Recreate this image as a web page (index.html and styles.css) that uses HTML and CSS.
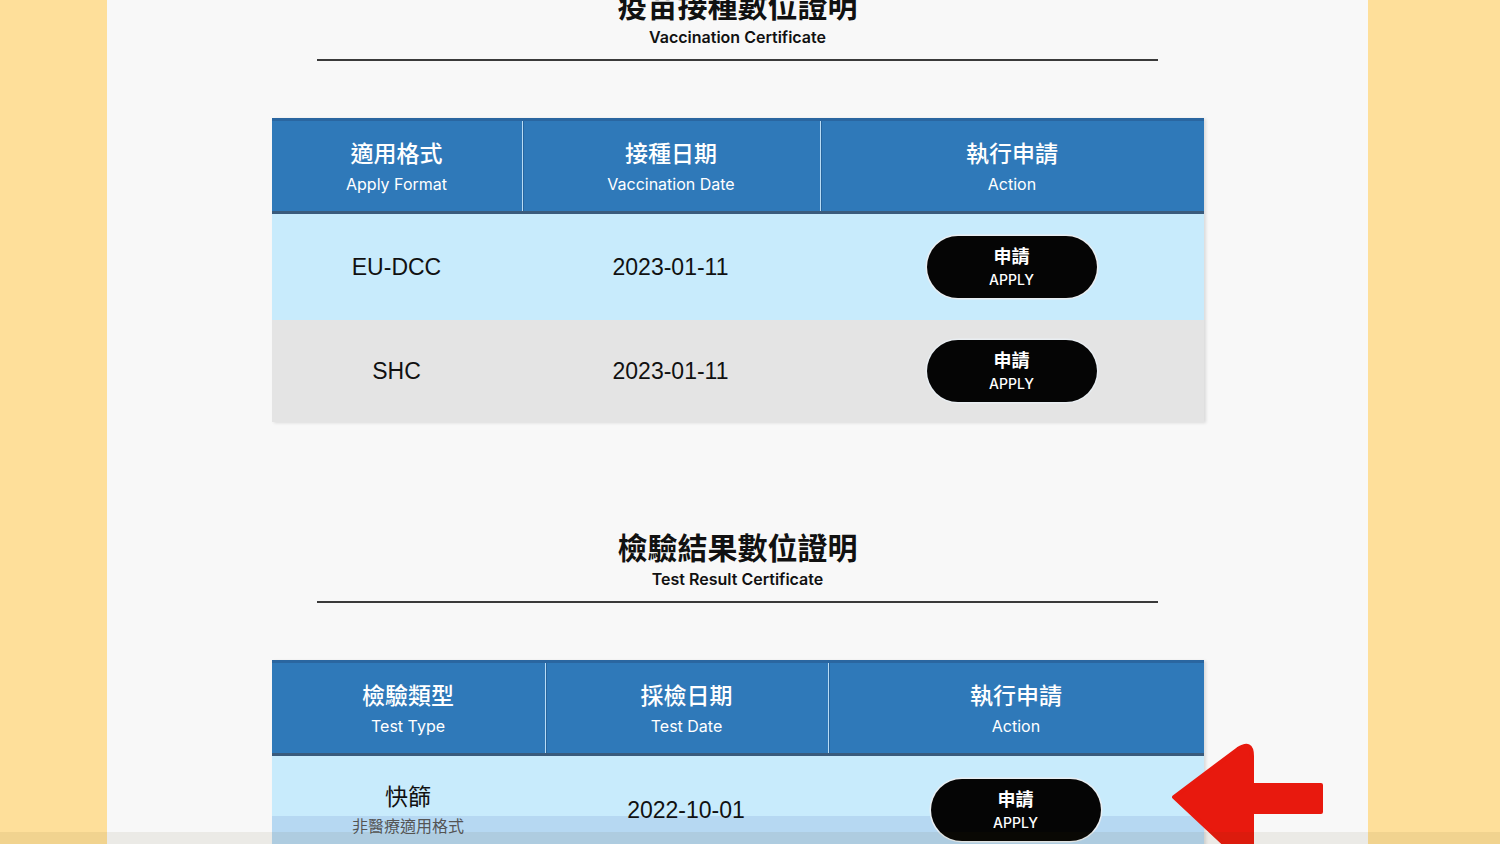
FILE: index.html
```html
<!DOCTYPE html>
<html lang="zh-Hant">
<head>
<meta charset="utf-8">
<title>數位證明</title>
<link rel="stylesheet" href="styles.css">
</head>
<body>
<main class="panel">
  <section class="section">
    <h1 class="title">疫苗接種數位證明</h1>
    <p class="subtitle">Vaccination Certificate</p>
    <hr class="rule">
    <div class="table table-vac">
      <div class="row head">
        <div class="cell"><span class="zh">適用格式</span><span class="en">Apply Format</span></div>
        <div class="cell"><span class="zh">接種日期</span><span class="en">Vaccination Date</span></div>
        <div class="cell"><span class="zh">執行申請</span><span class="en">Action</span></div>
      </div>
      <div class="row body blue">
        <div class="cell value">EU-DCC</div>
        <div class="cell value">2023-01-11</div>
        <div class="cell"><button class="apply"><b>申請</b><span>APPLY</span></button></div>
      </div>
      <div class="row body grey">
        <div class="cell value">SHC</div>
        <div class="cell value">2023-01-11</div>
        <div class="cell"><button class="apply"><b>申請</b><span>APPLY</span></button></div>
      </div>
    </div>
  </section>

  <section class="section">
    <h1 class="title">檢驗結果數位證明</h1>
    <p class="subtitle">Test Result Certificate</p>
    <hr class="rule">
    <div class="table table-test">
      <div class="row head">
        <div class="cell"><span class="zh">檢驗類型</span><span class="en">Test Type</span></div>
        <div class="cell"><span class="zh">採檢日期</span><span class="en">Test Date</span></div>
        <div class="cell"><span class="zh">執行申請</span><span class="en">Action</span></div>
      </div>
      <div class="row body blue tall">
        <div class="cell value"><span>快篩</span><span class="note">非醫療適用格式</span></div>
        <div class="cell value">2022-10-01</div>
        <div class="cell"><button class="apply"><b>申請</b><span>APPLY</span></button></div>
      </div>
    </div>
  </section>
</main>

<svg class="arrow" width="170" height="110" viewBox="1160 740 170 110" aria-hidden="true">
  <path d="M1174,797 L1238,749 Q1252,740 1252,756 L1252,785 L1321,785 L1321,812 L1252,812 L1252,870 Z" fill="#e8190e" stroke="#e8190e" stroke-width="4" stroke-linejoin="round"/>
</svg>
<div class="bottom-shade"></div>
</body>
</html>
```

FILE: styles.css
```css
html, body {
  margin: 0;
  padding: 0;
}

body {
  background: #fedf9a;
  font-family: "Liberation Sans", "Noto Sans CJK TC", sans-serif;
  color: #111;
  position: relative;
  height: 844px;
  overflow: hidden;
}

.panel {
  margin-left: 107px;
  width: 1261px;
  min-height: 900px;
  background: #f8f8f8;
  display: flex;
  flex-direction: column;
  align-items: center;
}

.section {
  width: 100%;
  display: flex;
  flex-direction: column;
  align-items: center;
}

.section:first-child {
  margin-top: -14px;
}

.section + .section {
  margin-top: 106px;
}

.title {
  margin: 0;
  font-family: "Noto Sans CJK TC", sans-serif;
  font-weight: 700;
  font-size: 30px;
  line-height: 36px;
  color: #111;
}

.subtitle {
  margin: 4px 0 0;
  font-family: Inter, "Liberation Sans", sans-serif;
  font-weight: 600;
  font-size: 16px;
  line-height: 22px;
  color: #111;
}

.rule {
  width: 841px;
  height: 2px;
  margin: 11px 0 0;
  border: 0;
  background: #3a3a3a;
}

.table {
  width: 932px;
  margin-top: 57px;
  display: flex;
  flex-direction: column;
  box-shadow: 2px 1px 3px rgba(0, 0, 0, 0.12);
}

.row {
  display: grid;
}

.table-vac .row {
  grid-template-columns: 250px 298px 384px;
}

.table-test .row {
  grid-template-columns: 273px 283px 376px;
}

.cell {
  display: flex;
  flex-direction: column;
  align-items: center;
  justify-content: center;
}

.head {
  background: #2f79b9;
  border-top: 3px solid #2a66a0;
  border-bottom: 3px solid #3a5b7c;
  color: #fff;
}

.head .cell {
  padding: 16px 0 17px;
  gap: 7px;
}

.head .cell + .cell {
  border-left: 1px solid #b9dcf5;
  box-shadow: inset 1px 0 0 #26649c;
}

.head .zh {
  font-family: "Noto Sans CJK TC", sans-serif;
  font-size: 23px;
  line-height: 30px;
  font-weight: 500;
}

.head .en {
  font-family: Inter, "Liberation Sans", sans-serif;
  font-size: 16px;
  line-height: 20px;
  font-weight: 400;
}

.body .cell {
  padding: 20px 0;
}

.blue .cell {
  padding: 22px 0;
}

.blue {
  background: #c8ebfc;
}

.grey {
  background: #e4e4e4;
}

.tall .cell {
  padding: 23px 0;
}

.tall {
  background: linear-gradient(to bottom, #c8ebfc 60px, #b6d8f2 60px);
}

.value {
  font-size: 23px;
  color: #111;
}

.value span {
  line-height: 30px;
}

.value .note {
  font-size: 16px;
  line-height: 22px;
  margin-top: 4px;
  color: #555;
}

.apply {
  width: 170px;
  height: 62px;
  border-radius: 31px;
  border: 0;
  background: #050505;
  box-shadow: 0 0 0 1.5px #e9eef2;
  color: #fff;
  display: flex;
  flex-direction: column;
  align-items: center;
  justify-content: center;
  gap: 6px;
  padding: 0;
  cursor: pointer;
}

.apply b {
  font-family: "Noto Sans CJK TC", sans-serif;
  font-size: 18px;
  line-height: 20px;
  font-weight: 700;
}

.apply span {
  font-family: Inter, "Liberation Sans", sans-serif;
  font-size: 14px;
  line-height: 18px;
  font-weight: 500;
}

.arrow {
  position: absolute;
  left: 1160px;
  top: 740px;
}

.bottom-shade {
  position: fixed;
  left: 0;
  right: 0;
  bottom: 0;
  height: 12px;
  background: rgba(70, 50, 0, 0.07);
}
```
